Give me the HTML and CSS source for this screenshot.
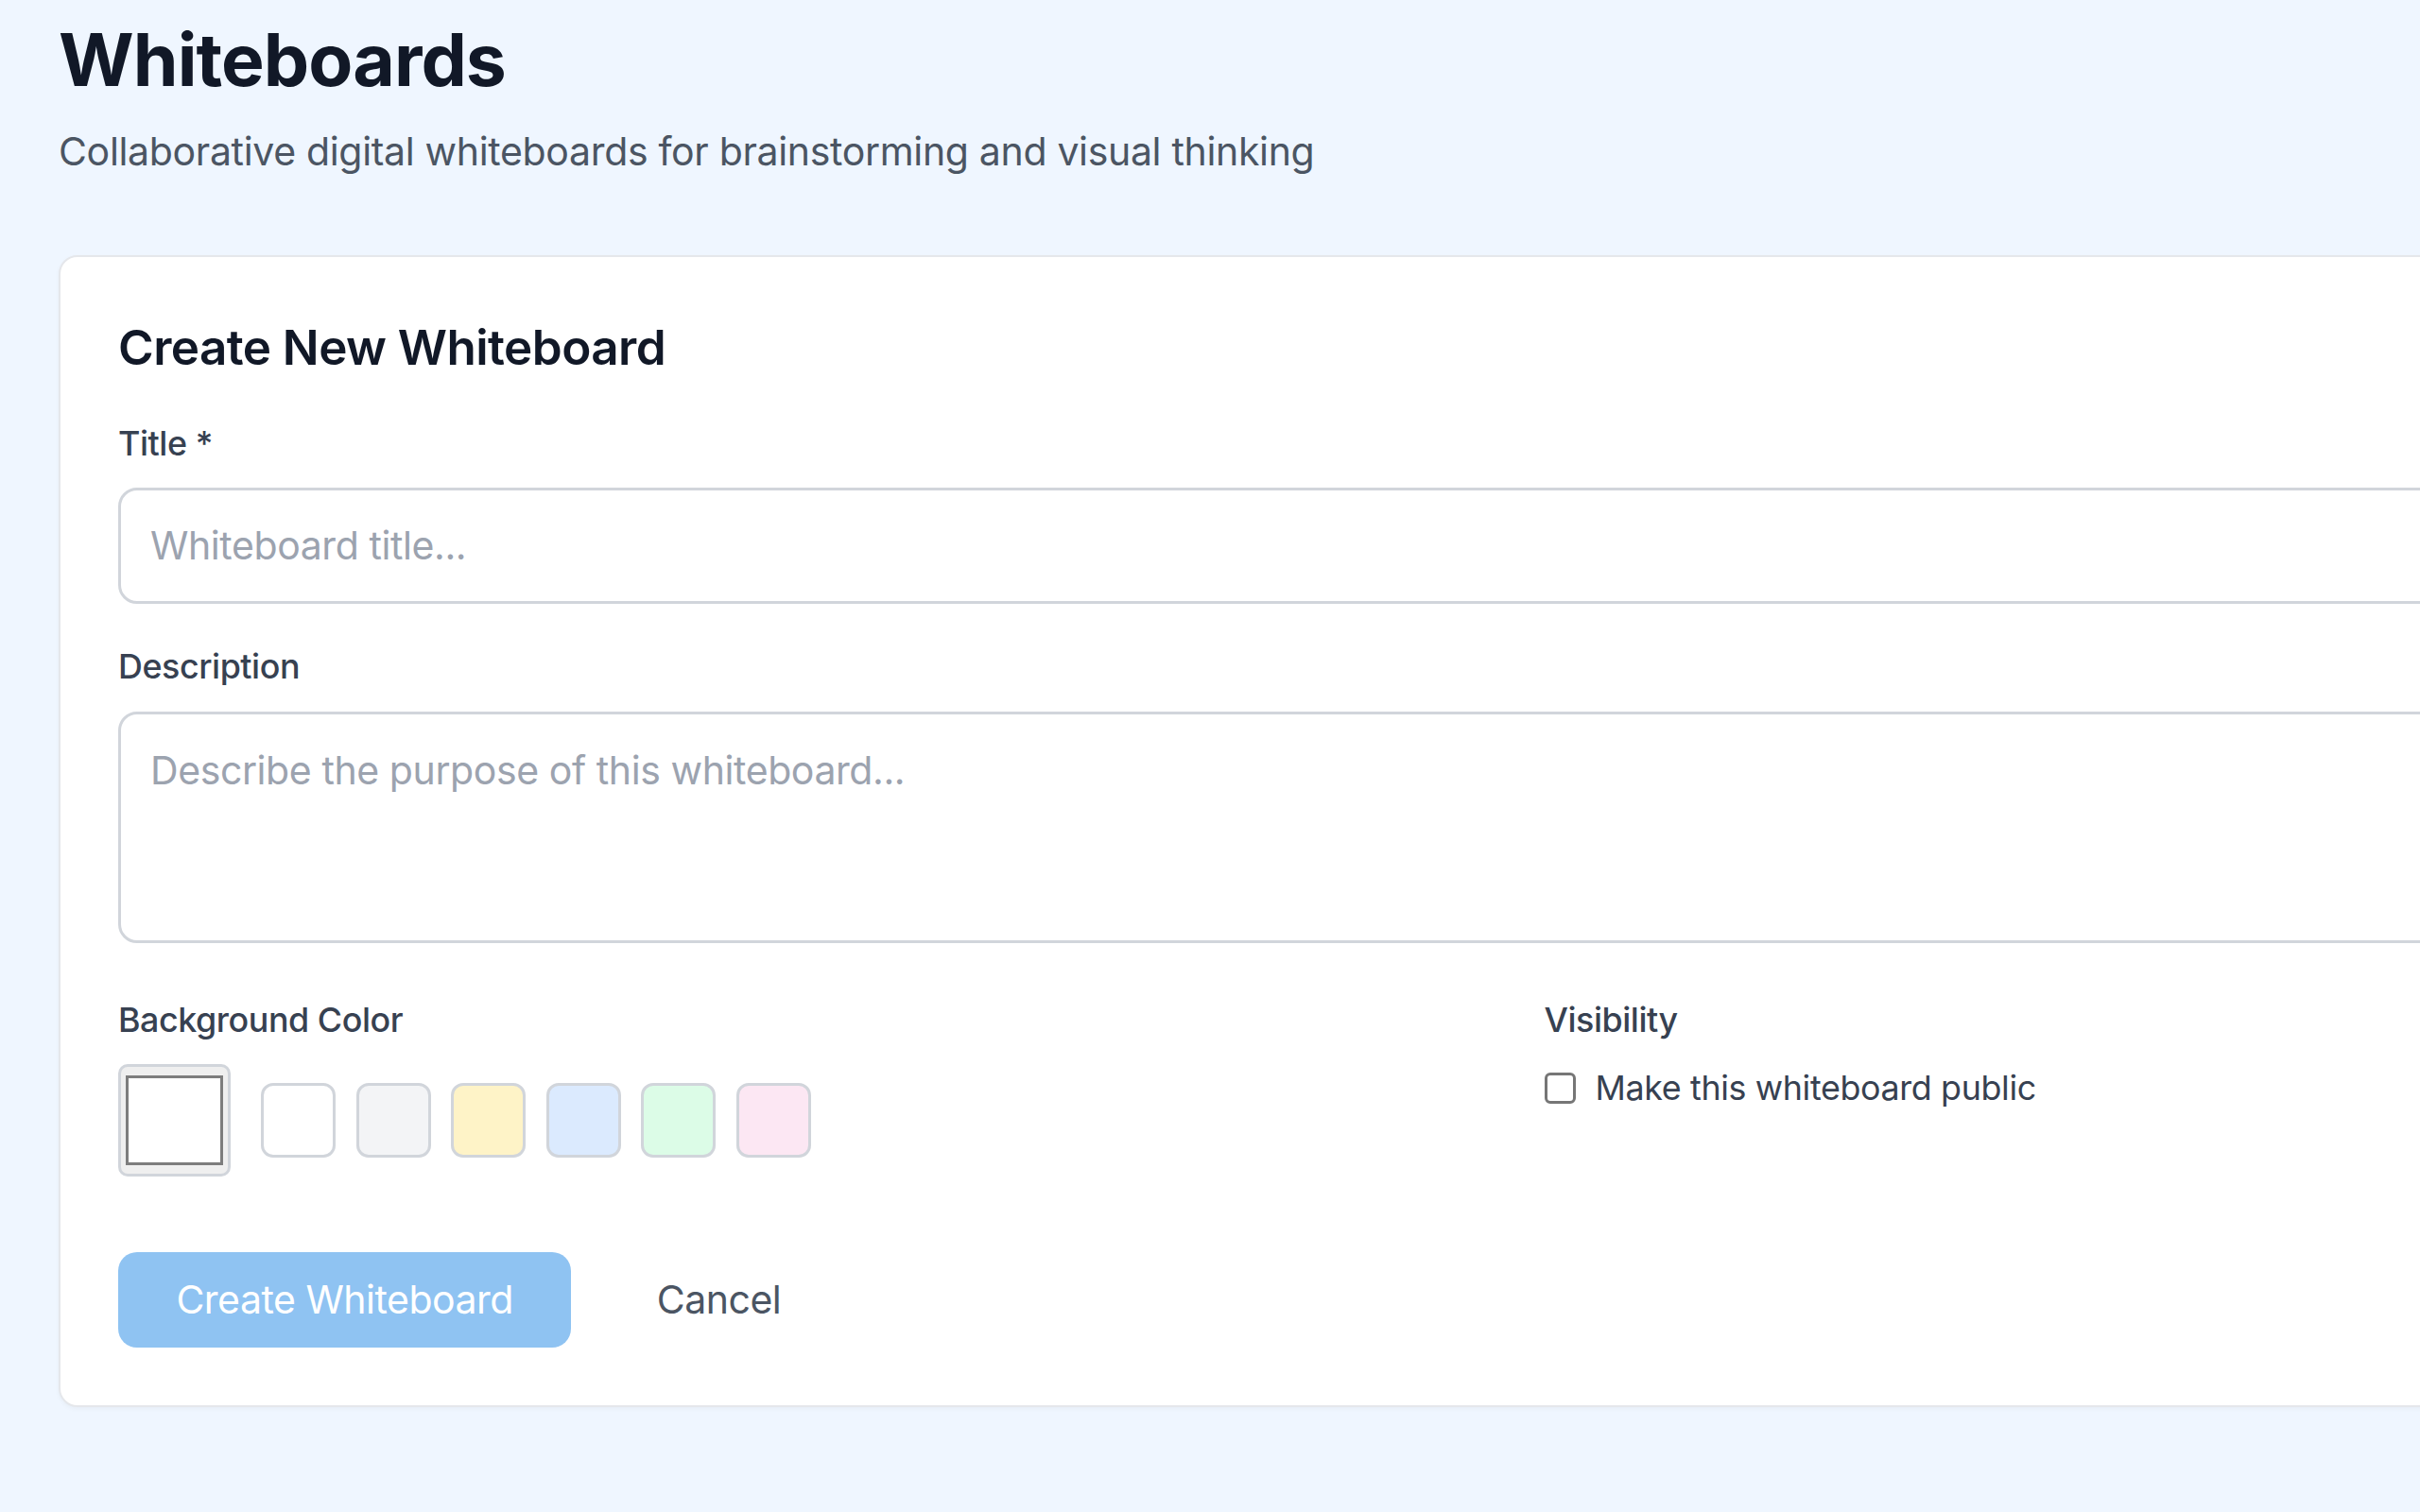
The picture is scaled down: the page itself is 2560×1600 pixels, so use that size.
FILE: index.html
```html
<!DOCTYPE html>
<html lang="en">
<head>
<meta charset="utf-8">
<title>Whiteboards</title>
<link rel="stylesheet" href="styles.css">
</head>
<body>
<main class="page">
  <header class="page-header">
    <h1 class="page-title">Whiteboards</h1>
    <p class="page-subtitle">Collaborative digital whiteboards for brainstorming and visual thinking</p>
  </header>

  <section class="card">
    <h2 class="card-title">Create New Whiteboard</h2>
    <form class="form">
      <div class="field">
        <label class="label" for="title">Title *</label>
        <input class="text-input" id="title" type="text" placeholder="Whiteboard title...">
      </div>
      <div class="field">
        <label class="label" for="desc">Description</label>
        <textarea class="text-area" id="desc" placeholder="Describe the purpose of this whiteboard..."></textarea>
      </div>
      <div class="options">
        <div class="option">
          <div class="label">Background Color</div>
          <div class="color-row">
            <div class="color-input"><div class="color-input-swatch"></div></div>
            <div class="swatches">
              <span class="swatch swatch-white"></span>
              <span class="swatch swatch-gray"></span>
              <span class="swatch swatch-yellow"></span>
              <span class="swatch swatch-blue"></span>
              <span class="swatch swatch-green"></span>
              <span class="swatch swatch-pink"></span>
            </div>
          </div>
        </div>
        <div class="option">
          <div class="label">Visibility</div>
          <div class="check-row">
            <span class="checkbox"></span>
            <span class="check-label">Make this whiteboard public</span>
          </div>
        </div>
      </div>
      <div class="actions">
        <button type="button" class="btn btn-primary">Create Whiteboard</button>
        <button type="button" class="btn btn-cancel">Cancel</button>
      </div>
    </form>
  </section>
</main>
</body>
</html>
```

FILE: styles.css
```css
html, body {
  margin: 0;
  padding: 0;
  overflow: hidden;
}

body {
  background: #eff6ff;
  font-family: "Inter", "Noto Sans", "Liberation Sans", sans-serif;
  color: #111827;
  width: 2560px;
  height: 1600px;
  letter-spacing: -0.01em;
}

.page {
  padding: 18px 0 0 62px;
  width: 3200px;
  box-sizing: border-box;
}

.page-title {
  margin: 0;
  font-size: 76.8px;
  line-height: 92px;
  font-weight: 700;
  color: #111827;
  letter-spacing: -0.012em;
}

.page-subtitle {
  margin: 19.5px 0 0;
  font-size: 41px;
  line-height: 61.4px;
  font-weight: 400;
  color: #4b5563;
  letter-spacing: -0.008em;
}

.card {
  margin-top: 79.5px;
  width: 3085px;
  box-sizing: border-box;
  background: #ffffff;
  border: 2px solid #e5e7eb;
  border-radius: 20px;
  box-shadow: 0 2px 5px rgba(0, 0, 0, 0.04);
  padding: 60px 61px 61px;
}

.card-title {
  margin: 0 0 39.5px;
  font-size: 51.2px;
  line-height: 71.7px;
  font-weight: 600;
  color: #111827;
  letter-spacing: -0.011em;
}

.form {
  display: flex;
  flex-direction: column;
}

.field {
  margin-bottom: 41.5px;
}

.field + .field {
  margin-bottom: 56px;
}

.label {
  display: block;
  font-size: 35.84px;
  line-height: 51.2px;
  font-weight: 500;
  color: #374151;
  margin-bottom: 21px;
  letter-spacing: -0.012em;
}

.text-input,
.text-area {
  display: block;
  width: 100%;
  box-sizing: border-box;
  border: 3px solid #d1d5db;
  border-radius: 20px;
  background: #ffffff;
  font-family: inherit;
  font-size: 41px;
  letter-spacing: -0.01em;
  color: #111827;
  outline: none;
  margin: 0;
}

.text-input {
  height: 123px;
  padding: 0 31px;
}

.text-area {
  height: 245px;
  padding: 29px 31px;
  line-height: 61.4px;
  resize: none;
}

.text-input::placeholder,
.text-area::placeholder {
  color: #9ca3af;
  opacity: 1;
}

.options {
  display: grid;
  grid-template-columns: 1fr 1fr;
  column-gap: 58px;
}

.color-row {
  display: flex;
  align-items: center;
  gap: 32px;
}

.color-input {
  width: 119px;
  height: 119px;
  box-sizing: border-box;
  border: 3px solid #d1d5db;
  border-radius: 10px;
  background: #efefef;
  padding: 9px 5px;
}

.color-input-swatch {
  height: 100%;
  box-sizing: border-box;
  border: 3px solid #7d7d7d;
  background: #ffffff;
}

.swatches {
  display: flex;
  gap: 21.5px;
}

.swatch {
  display: block;
  width: 79px;
  height: 79px;
  box-sizing: border-box;
  border: 3px solid #d1d5db;
  border-radius: 13px;
}

.swatch-white { background: #ffffff; }
.swatch-gray { background: #f3f4f6; }
.swatch-yellow { background: #fef3c7; }
.swatch-blue { background: #dbeafe; }
.swatch-green { background: #dcfce7; }
.swatch-pink { background: #fce7f3; }

.check-row {
  display: flex;
  align-items: center;
  gap: 21px;
  font-size: 35.84px;
  line-height: 51.2px;
  color: #374151;
  letter-spacing: -0.01em;
}

.checkbox {
  display: block;
  width: 33px;
  height: 33px;
  box-sizing: border-box;
  border: 3px solid #767676;
  border-radius: 6px;
  background: #ffffff;
}

.actions {
  display: flex;
  gap: 29px;
  margin-top: 80px;
}

.btn {
  height: 101px;
  padding: 0 61.4px;
  border: none;
  border-radius: 20px;
  font-family: inherit;
  font-size: 41px;
  line-height: 61.4px;
  letter-spacing: -0.012em;
  font-weight: 400;
  cursor: pointer;
  margin: 0;
}

.btn-primary {
  background: #8fc3f2;
  color: #ffffff;
}

.btn-cancel {
  background: transparent;
  color: #4b5563;
}
```
